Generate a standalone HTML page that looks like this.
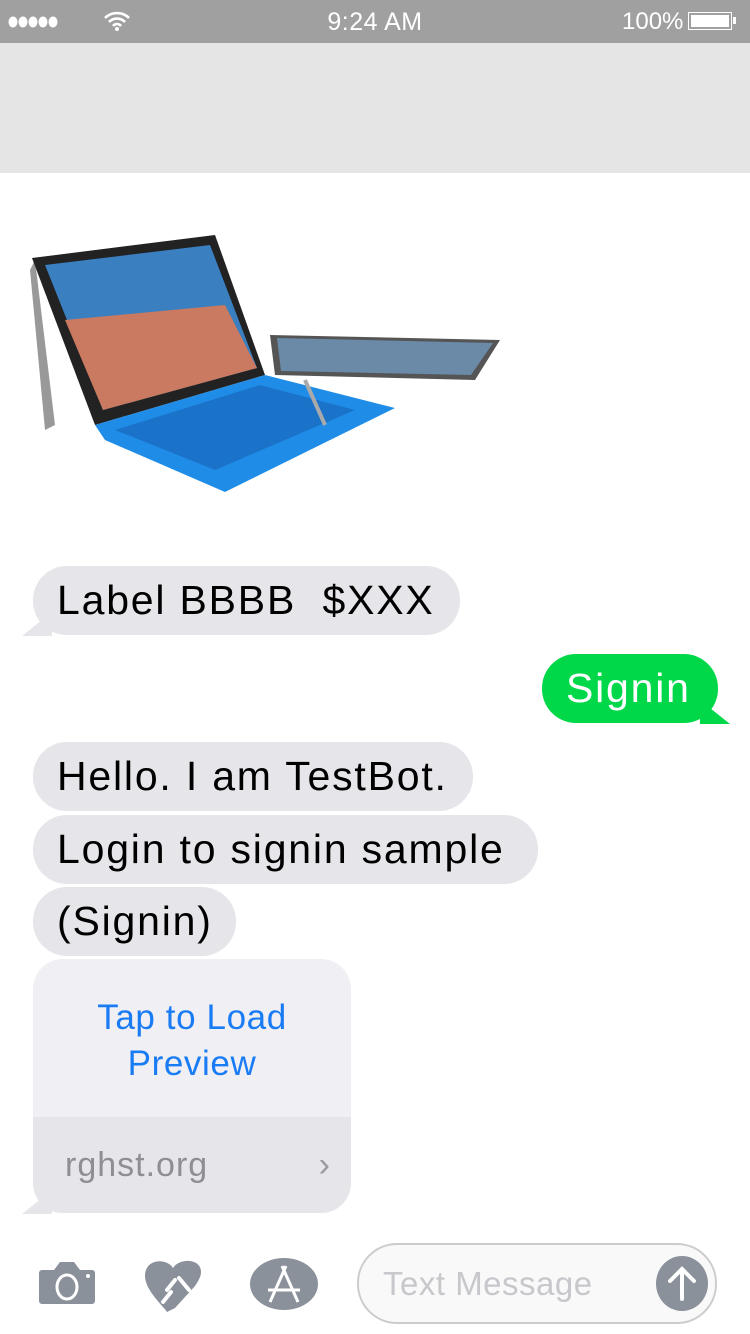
<!DOCTYPE html>
<html><head><meta charset="utf-8"><style>
body{margin:0;width:750px;height:1334px;position:relative;background:#fff;font-family:"Liberation Sans",sans-serif;overflow:hidden}
.a{position:absolute}
.b{position:absolute;background:#e5e5ea;border-radius:34px;height:69px;line-height:69px;font-size:41px;letter-spacing:1.8px;color:#000;padding:0 24px;box-sizing:border-box;white-space:nowrap}
</style></head><body>
<div class="a" style="left:0;top:0;width:750px;height:43px;background:#a0a0a0;color:#fff;font-size:23px">
 <svg class="a" style="left:8px;top:15px" width="50" height="14" viewBox="0 0 50 14"><g fill="#fff"><ellipse cx="5" cy="7" rx="4.5" ry="5.5"/><ellipse cx="15" cy="7" rx="4.5" ry="5.5"/><ellipse cx="25" cy="7" rx="4.5" ry="5.5"/><ellipse cx="35" cy="7" rx="4.5" ry="5.5"/><ellipse cx="45" cy="7" rx="4.5" ry="5.5"/></g></svg>
 <svg class="a" style="left:103px;top:11px" width="28" height="20" viewBox="0 0 28 20"><path d="M2 7a17 17 0 0 1 24 0M6 11a11 11 0 0 1 16 0M10 15a5 5 0 0 1 8 0" stroke="#fff" stroke-width="2.6" fill="none"/><circle cx="14" cy="18" r="2" fill="#fff"/></svg>
 <div class="a" style="left:0;width:750px;top:8px;text-align:center;font-size:25px;letter-spacing:0.5px">9:24 AM</div>
 <div class="a" style="left:622px;top:8px;font-size:24px">100%</div>
 <div class="a" style="left:688px;top:12px;width:44px;height:18px;border:1.5px solid #fff;box-sizing:border-box;padding:2px"><div style="background:#fff;width:100%;height:100%"></div></div>
 <div class="a" style="left:733px;top:17px;width:3px;height:7px;background:#fff"></div>
</div>
<div class="a" style="left:0;top:43px;width:750px;height:130px;background:#e5e5e5"></div>
<svg class="a" style="left:25px;top:230px" width="490" height="270" viewBox="0 0 490 270">
 <polygon points="245,105 475,110 450,150 250,145" fill="#555"/>
 <polygon points="252,108 468,113 446,145 256,141" fill="#6a8aa8"/>
 <polygon points="10,30 5,40 20,200 30,195" fill="#999"/>
 <polygon points="7,28 190,5 240,145 70,195" fill="#222"/>
 <polygon points="20,35 185,15 232,138 78,180" fill="#3a7fc0"/>
 <polygon points="40,90 200,75 232,138 78,180" fill="#c97a60"/>
 <polygon points="70,195 240,145 370,178 200,262 80,210" fill="#1f8de8"/>
 <polygon points="90,200 235,155 330,180 190,240" fill="#1a73c9"/>
 <line x1="280" y1="150" x2="300" y2="195" stroke="#aaa" stroke-width="4"/>
</svg>
<div class="b" style="left:33px;top:566px;width:427px">Label BBBB&nbsp; $XXX</div>
<div class="a" style="left:22px;top:612px;width:30px;height:24px;background:#e5e5ea;clip-path:polygon(0 100%,100% 0,100% 100%)"></div>
<div class="b" style="left:542px;top:654px;width:176px;background:#00d84a;color:#fff">Signin</div>
<div class="a" style="left:700px;top:700px;width:30px;height:24px;background:#00d84a;clip-path:polygon(100% 100%,0 0,0 100%)"></div>
<div class="b" style="left:33px;top:742px;width:440px">Hello. I am TestBot.</div>
<div class="b" style="left:33px;top:815px;width:505px">Login to signin sample</div>
<div class="b" style="left:33px;top:887px;width:203px">(Signin)</div>
<div class="a" style="left:33px;top:959px;width:318px;height:254px;border-radius:30px;overflow:hidden;background:#efeff4">
 <div class="a" style="left:0;top:36px;width:318px;text-align:center;color:#1a7cf5;font-size:35px;letter-spacing:0.6px;line-height:46px">Tap to Load<br>Preview</div>
 <div class="a" style="left:0;top:158px;width:318px;height:96px;background:#e5e5ea;color:#8e8e93;font-size:34px;letter-spacing:1px;line-height:96px;padding-left:32px;box-sizing:border-box">rghst.org<span style="position:absolute;right:20px;font-size:34px;color:#9a9a9e">›</span></div>
</div>
<div class="a" style="left:22px;top:1190px;width:30px;height:24px;background:#e5e5ea;clip-path:polygon(0 100%,100% 0,100% 100%)"></div>
<svg class="a" style="left:38px;top:1260px" width="58" height="46" viewBox="0 0 58 46"><path d="M4 10h12l6-8h14l6 8h12a3 3 0 0 1 3 3v28a3 3 0 0 1-3 3H4a3 3 0 0 1-3-3V13a3 3 0 0 1 3-3z" fill="#8a919b"/><ellipse cx="29" cy="27" rx="10" ry="12" fill="none" stroke="#fff" stroke-width="3"/><circle cx="50" cy="16" r="2" fill="#fff"/></svg>
<svg class="a" style="left:143px;top:1258px" width="60" height="56" viewBox="0 0 60 56"><path d="M30 10C24 0 2 0 2 18c0 14 18 30 22 36l8-4 20-22c4-6 6-10 6-14C58 0 36 0 30 10z" fill="#8a919b"/><path d="M24 32l8-10M36 20l10 12M20 44l8-10" stroke="#fff" stroke-width="4" stroke-linecap="round"/></svg>
<div class="a" style="left:250px;top:1258px;width:68px;height:52px;border-radius:50%;background:#8a919b"></div>
<svg class="a" style="left:258px;top:1262px" width="52" height="46" viewBox="0 0 52 46"><path d="M28 4L12 40M24 4l16 36M10 28h32" stroke="#fff" stroke-width="3" fill="none"/></svg>
<div class="a" style="left:357px;top:1243px;width:360px;height:81px;border:2px solid #ccc;border-radius:40px;box-sizing:border-box;background:#f9f9f9"></div>
<div class="a" style="left:383px;top:1265px;font-size:33px;letter-spacing:0.5px;color:#c7c7cc">Text Message</div>
<div class="a" style="left:656px;top:1256px;width:52px;height:55px;border-radius:50%;background:#8a919b"></div>
<svg class="a" style="left:656px;top:1256px" width="52" height="55" viewBox="0 0 52 55"><path d="M26 43V13M14 25l12-12 12 12" stroke="#fff" stroke-width="4" fill="none" stroke-linecap="round"/></svg>
</body></html>
